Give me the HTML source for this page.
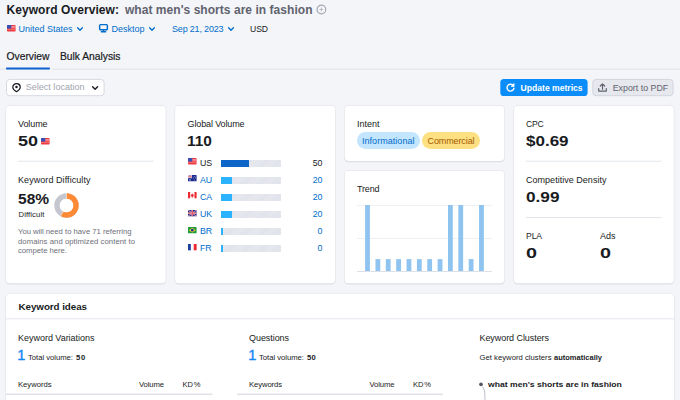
<!DOCTYPE html>
<html lang="en"><head><meta charset="utf-8"><title>Keyword Overview</title>
<style>
html,body{margin:0;padding:0;}
body{width:680px;height:400px;overflow:hidden;background:#f4f5f9;font-family:"Liberation Sans",sans-serif;}
#page{position:relative;width:680px;height:400px;overflow:hidden;background:#f4f5f9;}
.t{position:absolute;line-height:1;white-space:nowrap;}
.abs{position:absolute;}
svg{position:absolute;overflow:visible;}
.bar{background:#dfe2ea;background-image:repeating-linear-gradient(135deg,rgba(255,255,255,.25) 0 1px,transparent 1px 2px);}
.bar i{display:block;height:100%;}
.tab{-webkit-text-stroke:0.2px currentColor;}
.one{-webkit-text-stroke:0.35px currentColor;}

</style></head><body>
<div id="page">
<svg style="left:0;top:0" width="680" height="400" viewBox="0 0 680 400">
<rect x="0" y="68.6" width="680" height="1" fill="#dfe1e7"/>
<rect x="49" y="67" width="3.5" height="3" fill="#f4f5f9"/>
<rect x="6" y="67.5" width="44" height="2" rx="0.8" fill="#0d63d2"/>
<rect x="5.5" y="105.3" width="160.7" height="179.2" rx="4.3" fill="#191b23" fill-opacity="0.1"/>
<rect x="6" y="105.7" width="159.7" height="177.5" rx="3.8" fill="#fff"/>
<rect x="174.6" y="105.3" width="161.1" height="179.2" rx="4.3" fill="#191b23" fill-opacity="0.1"/>
<rect x="175.1" y="105.7" width="160.1" height="177.5" rx="3.8" fill="#fff"/>
<rect x="344.1" y="105.3" width="160.7" height="56.9" rx="4.3" fill="#191b23" fill-opacity="0.1"/>
<rect x="344.6" y="105.7" width="159.7" height="55.2" rx="3.8" fill="#fff"/>
<rect x="344.1" y="170.3" width="160.7" height="114.2" rx="4.3" fill="#191b23" fill-opacity="0.1"/>
<rect x="344.6" y="170.7" width="159.7" height="112.5" rx="3.8" fill="#fff"/>
<rect x="513.5" y="105.3" width="160.8" height="179.2" rx="4.3" fill="#191b23" fill-opacity="0.1"/>
<rect x="514" y="105.7" width="159.8" height="177.5" rx="3.8" fill="#fff"/>
<rect x="5.5" y="293.1" width="669.0" height="121.7" rx="4.3" fill="#191b23" fill-opacity="0.1"/>
<rect x="6" y="293.5" width="668" height="120" rx="3.8" fill="#fff"/>
<rect x="18" y="160.75" width="135.5" height="0.9" fill="#dfe4e9"/>
<rect x="526" y="160.75" width="135.5" height="0.9" fill="#dfe4e9"/>
<rect x="526" y="217" width="135.5" height="0.9" fill="#dfe4e9"/>
<rect x="6" y="318.3" width="668" height="1" fill="#e4e6ee"/>
<rect x="6" y="393.6" width="206.5" height="1.3" fill="#dcdee6"/>
<rect x="237" y="393.6" width="206" height="1.3" fill="#dcdee6"/>
<rect x="6.5" y="79.4" width="97.6" height="16.3" rx="3.3" fill="#fff" stroke="#d6d9e1" stroke-width="1"/>
<rect x="500.3" y="79" width="87.3" height="17" rx="3.6" fill="#0a8df8"/>
<rect x="592.8" y="79.4" width="80.3" height="16.3" rx="3.3" fill="#e6e8ee" stroke="#d2d5dd" stroke-width="1"/>
</svg>
<svg style="left:316px;top:4px" width="11" height="11" viewBox="0 0 11 11"><circle cx="5.4" cy="5.5" r="4.35" fill="none" stroke="#a3a6b1" stroke-width="1.15"/><path d="M5.4 3.6v3.8M3.5 5.5h3.8" stroke="#b4b6c0" stroke-width="0.9" fill="none"/></svg>
<svg style="left:6.5px;top:25.1px" width="8.6" height="6.4" viewBox="0 0 17 12.8" preserveAspectRatio="none"><rect width="17" height="12.8" rx="1.4" fill="#ee3b42"/><rect x="8" y="2.2" width="9" height="1.3" fill="#f8b9bb"/><rect x="8" y="5" width="9" height="1.3" fill="#f8b9bb"/><rect x="0" y="7.8" width="17" height="1.1" fill="#f59a9d"/><path d="M1.4 0H8.4V6.8H0V1.4A1.4 1.4 0 0 1 1.4 0z" fill="#3a4fb3"/></svg>
<svg style="left:77px;top:27px" width="6" height="4.6" viewBox="0 0 6 4.6"><path d="M0.6 0.7L3.0 3.3000000000000003L5.4 0.7" fill="none" stroke="#006dca" stroke-width="1.3" stroke-linecap="round" stroke-linejoin="round"/></svg>
<svg style="left:149.2px;top:27px" width="6" height="4.6" viewBox="0 0 6 4.6"><path d="M0.6 0.7L3.0 3.3000000000000003L5.4 0.7" fill="none" stroke="#006dca" stroke-width="1.3" stroke-linecap="round" stroke-linejoin="round"/></svg>
<svg style="left:228px;top:27px" width="6" height="4.6" viewBox="0 0 6 4.6"><path d="M0.6 0.7L3.0 3.3000000000000003L5.4 0.7" fill="none" stroke="#006dca" stroke-width="1.3" stroke-linecap="round" stroke-linejoin="round"/></svg>
<svg style="left:99.4px;top:24px" width="9" height="8.6" viewBox="0 0 9 8.6"><rect x="0.65" y="0.65" width="7.7" height="5.2" rx="0.9" fill="none" stroke="#006dca" stroke-width="1.45"/><path d="M4.5 5.9v1.6M2.3 7.8h4.4" stroke="#006dca" stroke-width="1.35" stroke-linecap="round" fill="none"/></svg>
<svg style="left:11.8px;top:83.2px" width="9" height="9.4" viewBox="0 0 9 9.4"><path d="M4.5 0.65C2.4 0.65 0.75 2.25 0.75 4.25c0 1.9 1.9 3.4 3.75 4.5 1.85-1.1 3.75-2.6 3.75-4.5C8.25 2.25 6.6 0.65 4.5 0.65z" fill="none" stroke="#191b23" stroke-width="1.2" stroke-linejoin="round"/><circle cx="4.5" cy="4.1" r="1.25" fill="#191b23"/></svg>
<svg style="left:91.8px;top:85.8px" width="6.2" height="4.6" viewBox="0 0 6.2 4.6"><path d="M0.6 0.7L3.1 3.3000000000000003L5.6000000000000005 0.7" fill="none" stroke="#191b23" stroke-width="1.4" stroke-linecap="round" stroke-linejoin="round"/></svg>
<svg style="left:506.2px;top:83px" width="9" height="9" viewBox="0 0 9 9"><path d="M7.35 2.7A3.45 3.45 0 1 0 7.9 5.3" fill="none" stroke="#fff" stroke-width="1.4" stroke-linecap="round"/><path d="M8.1 0.5v2.9H5.2z" fill="#fff" stroke="#fff" stroke-width="0.7" stroke-linejoin="round"/></svg>
<svg style="left:598px;top:83.2px" width="9" height="9" viewBox="0 0 9 9"><path d="M4.5 6.2V1M2.3 3L4.5 0.8 6.7 3" fill="none" stroke="#5f616c" stroke-width="1.2" stroke-linecap="round" stroke-linejoin="round"/><path d="M0.7 5.6v2.5h7.6V5.6" fill="none" stroke="#5f616c" stroke-width="1.2" stroke-linecap="round" stroke-linejoin="round"/></svg>
<svg style="left:41px;top:137.8px" width="8.6" height="6.4" viewBox="0 0 17 12.8" preserveAspectRatio="none"><rect width="17" height="12.8" rx="1.4" fill="#ee3b42"/><rect x="8" y="2.2" width="9" height="1.3" fill="#f8b9bb"/><rect x="8" y="5" width="9" height="1.3" fill="#f8b9bb"/><rect x="0" y="7.8" width="17" height="1.1" fill="#f59a9d"/><path d="M1.4 0H8.4V6.8H0V1.4A1.4 1.4 0 0 1 1.4 0z" fill="#3a4fb3"/></svg>
<svg style="left:54.1px;top:192.6px" width="25" height="25" viewBox="0 0 25 25"><circle cx="12.5" cy="12.5" r="9.5" fill="none" stroke="#c4c7cf" stroke-width="5.4"/><circle cx="12.5" cy="12.5" r="9.5" fill="none" stroke="#ff8a35" stroke-width="5.4" stroke-dasharray="34.62 59.69" transform="rotate(-90 12.5 12.5)"/><path d="M12.5 12.5V0M12.5 12.5L5.76 24.77" stroke="#fff" stroke-width="0.5" fill="none"/><circle cx="12.5" cy="12.5" r="6.8" fill="#fff"/></svg>
<svg style="left:188.2px;top:158.2px" width="8.6" height="6.4" viewBox="0 0 17 12.8" preserveAspectRatio="none"><rect width="17" height="12.8" rx="1.4" fill="#ee3b42"/><rect x="8" y="2.2" width="9" height="1.3" fill="#f8b9bb"/><rect x="8" y="5" width="9" height="1.3" fill="#f8b9bb"/><rect x="0" y="7.8" width="17" height="1.1" fill="#f59a9d"/><path d="M1.4 0H8.4V6.8H0V1.4A1.4 1.4 0 0 1 1.4 0z" fill="#3a4fb3"/></svg>
<div class="abs bar" style="left:221.3px;top:159.5px;width:60.2px;height:7px;"><i style="width:27.7px;background:#0e66c8"></i></div>
<svg style="left:188.2px;top:175.3px" width="8.6" height="6.3" viewBox="0 0 17 12" preserveAspectRatio="none"><rect width="17" height="12" rx="1.2" fill="#1b2a8e"/><path d="M0 0L8 6M8 0L0 6" stroke="#fff" stroke-width="1.6"/><path d="M4 0v6M0 3h8" stroke="#fff" stroke-width="2.2"/><path d="M4 0v6M0 3h8" stroke="#e8424e" stroke-width="1.1"/><circle cx="4" cy="9.3" r="1.3" fill="#fff"/><circle cx="12.5" cy="2.6" r="0.9" fill="#fff"/><circle cx="14.6" cy="5.4" r="0.9" fill="#fff"/><circle cx="12.5" cy="9.6" r="0.9" fill="#fff"/><circle cx="10.6" cy="5.8" r="0.9" fill="#fff"/></svg>
<div class="abs bar" style="left:221.3px;top:176.6px;width:60.2px;height:7px;"><i style="width:10.8px;background:#2bb3ff"></i></div>
<svg style="left:188.2px;top:192.4px" width="8.6" height="6.3" viewBox="0 0 17 12" preserveAspectRatio="none"><rect width="17" height="12" rx="1.2" fill="#fafafa"/><rect width="4.2" height="12" fill="#ee2730"/><rect x="12.8" width="4.2" height="12" fill="#ee2730"/><path d="M8.5 2.2l1 1.9 1.3-.5-.5 2.4 1.5-.3-.5 1.3.6.5-2.6 1.6.2 1.3H7.5l.2-1.3-2.6-1.6.6-.5-.5-1.3 1.5.3-.5-2.4 1.3.5z" fill="#ee2730"/></svg>
<div class="abs bar" style="left:221.3px;top:193.7px;width:60.2px;height:7px;"><i style="width:10.8px;background:#2bb3ff"></i></div>
<svg style="left:188.2px;top:209.5px" width="8.6" height="6.3" viewBox="0 0 17 12" preserveAspectRatio="none"><rect width="17" height="12" rx="1.4" fill="#1f2f8f"/><path d="M0 0L17 12M17 0L0 12" stroke="#dfe3f3" stroke-width="1.5"/><path d="M0 0L17 12M17 0L0 12" stroke="#e8424e" stroke-width="0.8"/><path d="M8.5 0v12M0 6h17" stroke="#eef0f8" stroke-width="2.9"/><path d="M8.5 0v12M0 6h17" stroke="#e8303a" stroke-width="1.7"/></svg>
<div class="abs bar" style="left:221.3px;top:210.8px;width:60.2px;height:7px;"><i style="width:10.8px;background:#2bb3ff"></i></div>
<svg style="left:188.2px;top:226.6px" width="8.6" height="6.3" viewBox="0 0 17 12" preserveAspectRatio="none"><rect width="17" height="12" rx="1.2" fill="#1f9a3c"/><path d="M8.5 1.5L15.3 6 8.5 10.5 1.7 6z" fill="#f9d633"/><circle cx="8.5" cy="6" r="2.7" fill="#1c2f9a"/></svg>
<div class="abs bar" style="left:221.3px;top:227.9px;width:60.2px;height:7px;"><i style="width:1.5px;background:#2bb3ff"></i></div>
<svg style="left:188.2px;top:243.7px" width="8.6" height="6.3" viewBox="0 0 17 12" preserveAspectRatio="none"><rect width="17" height="12" rx="1.2" fill="#fafafa"/><rect width="5.6" height="12" fill="#1f3fa0"/><rect x="11.4" width="5.6" height="12" fill="#ee2730"/></svg>
<div class="abs bar" style="left:221.3px;top:245.0px;width:60.2px;height:7px;"><i style="width:1.5px;background:#2bb3ff"></i></div>
<div class="abs" style="left:357px;top:132px;width:62.5px;height:16.5px;border-radius:9px;background:#c4e5fe;"></div>
<div class="abs" style="left:422px;top:132px;width:58px;height:16.5px;border-radius:9px;background:#fce081;"></div>
<svg style="left:357px;top:200px" width="136" height="75" viewBox="0 0 136 75"><path d="M0 5.5H135" stroke="#eff0f4" stroke-width="1"/><path d="M0 38.5H135" stroke="#eff0f4" stroke-width="1"/><path d="M0 71.5H135" stroke="#dde0e6" stroke-width="1"/><rect x="8.10" y="5.00" width="4.8" height="66.00" fill="#8ec4ef"/><rect x="18.46" y="59.12" width="4.8" height="11.88" fill="#8ec4ef"/><rect x="28.82" y="59.12" width="4.8" height="11.88" fill="#8ec4ef"/><rect x="39.18" y="59.12" width="4.8" height="11.88" fill="#8ec4ef"/><rect x="49.54" y="59.12" width="4.8" height="11.88" fill="#8ec4ef"/><rect x="59.90" y="59.12" width="4.8" height="11.88" fill="#8ec4ef"/><rect x="70.26" y="59.12" width="4.8" height="11.88" fill="#8ec4ef"/><rect x="80.62" y="59.12" width="4.8" height="11.88" fill="#8ec4ef"/><rect x="90.98" y="5.00" width="4.8" height="66.00" fill="#8ec4ef"/><rect x="101.34" y="5.00" width="4.8" height="66.00" fill="#8ec4ef"/><rect x="111.70" y="59.12" width="4.8" height="11.88" fill="#8ec4ef"/><rect x="122.06" y="5.00" width="4.8" height="66.00" fill="#8ec4ef"/></svg>
<svg style="left:479px;top:382px" width="12" height="20" viewBox="0 0 12 20"><circle cx="2" cy="2.3" r="1.85" fill="#535765"/><path d="M3.2 4.6C5.6 6.5 6 9.5 6 20" fill="none" stroke="#c3c6cf" stroke-width="1.1"/></svg>
<span class="t" style="top:4.01px;font-size:12px;color:#191b23;font-weight:700;letter-spacing:0.068px;left:6.50px;">Keyword Overview:</span>
<span class="t" style="top:4.01px;font-size:12px;color:#60626e;font-weight:700;letter-spacing:0.040px;left:125.00px;">what men's shorts are in fashion</span>
<span class="t" style="top:25.01px;font-size:9px;color:#006dca;letter-spacing:-0.003px;left:18.50px;">United States</span>
<span class="t" style="top:25.01px;font-size:9px;color:#006dca;letter-spacing:-0.005px;left:111.50px;">Desktop</span>
<span class="t" style="top:25.01px;font-size:9px;color:#006dca;letter-spacing:-0.179px;left:172.00px;">Sep 21, 2023</span>
<span class="t" style="top:25.00px;font-size:8.6px;color:#191b23;letter-spacing:-0.062px;left:250.00px;">USD</span>
<span class="t tab" style="top:52.02px;font-size:10.3px;color:#191b23;letter-spacing:0.010px;left:6.50px;">Overview</span>
<span class="t tab" style="top:52.02px;font-size:10.3px;color:#191b23;letter-spacing:-0.014px;left:60.00px;">Bulk Analysis</span>
<span class="t" style="top:83.42px;font-size:9px;color:#a0a3ae;letter-spacing:0.024px;left:25.70px;">Select location</span>
<span class="t" style="top:83.71px;font-size:8.6px;color:#ffffff;font-weight:700;letter-spacing:-0.007px;left:520.60px;">Update metrics</span>
<span class="t" style="top:83.70px;font-size:8.8px;color:#60626d;letter-spacing:0.020px;left:612.70px;">Export to PDF</span>
<span class="t" style="top:120.01px;font-size:9px;color:#191b23;letter-spacing:-0.097px;left:18.00px;">Volume</span>
<span class="t" style="top:134.02px;font-size:14.6px;color:#191b23;font-weight:700;transform:scaleX(1.232);transform-origin:0 0;left:17.60px;">50</span>
<span class="t" style="top:176.01px;font-size:9px;color:#191b23;letter-spacing:0.065px;left:18.00px;">Keyword Difficulty</span>
<span class="t" style="top:192.02px;font-size:14.6px;color:#191b23;font-weight:700;transform:scaleX(1.064);transform-origin:0 0;left:17.80px;">58%</span>
<span class="t" style="top:211.01px;font-size:7.7px;color:#191b23;letter-spacing:0.097px;left:18.50px;">Difficult</span>
<span class="t" style="top:228.01px;font-size:7.7px;color:#6c6e79;letter-spacing:-0.010px;left:18.00px;">You will need to have 71 referring</span>
<span class="t" style="top:238.01px;font-size:7.7px;color:#6c6e79;letter-spacing:0.064px;left:18.00px;">domains and optimized content to</span>
<span class="t" style="top:247.41px;font-size:7.7px;color:#6c6e79;letter-spacing:-0.013px;left:18.00px;">compete here.</span>
<span class="t" style="top:120.01px;font-size:9px;color:#191b23;letter-spacing:-0.124px;left:187.50px;">Global Volume</span>
<span class="t" style="top:134.02px;font-size:14.6px;color:#191b23;font-weight:700;transform:scaleX(1.057);transform-origin:0 0;left:187.30px;">110</span>
<span class="t" style="top:158.61px;font-size:8.8px;color:#191b23;left:200.00px;">US</span>
<span class="t" style="top:158.61px;font-size:8.8px;color:#191b23;right:357.50px;">50</span>
<span class="t" style="top:175.70px;font-size:8.8px;color:#006dca;left:200.00px;">AU</span>
<span class="t" style="top:175.70px;font-size:8.8px;color:#006dca;right:357.50px;">20</span>
<span class="t" style="top:192.81px;font-size:8.8px;color:#006dca;left:200.00px;">CA</span>
<span class="t" style="top:192.81px;font-size:8.8px;color:#006dca;right:357.50px;">20</span>
<span class="t" style="top:209.91px;font-size:8.8px;color:#006dca;left:200.00px;">UK</span>
<span class="t" style="top:209.91px;font-size:8.8px;color:#006dca;right:357.50px;">20</span>
<span class="t" style="top:227.00px;font-size:8.8px;color:#006dca;left:200.00px;">BR</span>
<span class="t" style="top:227.00px;font-size:8.8px;color:#006dca;right:357.50px;">0</span>
<span class="t" style="top:244.11px;font-size:8.8px;color:#006dca;left:200.00px;">FR</span>
<span class="t" style="top:244.11px;font-size:8.8px;color:#006dca;right:357.50px;">0</span>
<span class="t" style="top:120.01px;font-size:9px;color:#191b23;letter-spacing:-0.006px;left:357.00px;">Intent</span>
<span class="t" style="top:136.51px;font-size:9px;color:#006dca;letter-spacing:0.037px;left:362.00px;">Informational</span>
<span class="t" style="top:136.51px;font-size:9px;color:#a75800;letter-spacing:-0.107px;left:427.50px;">Commercial</span>
<span class="t" style="top:184.51px;font-size:9px;color:#191b23;letter-spacing:-0.153px;left:357.00px;">Trend</span>
<span class="t" style="top:120.00px;font-size:8.6px;color:#191b23;letter-spacing:-0.263px;left:526.00px;">CPC</span>
<span class="t" style="top:134.02px;font-size:14.6px;color:#191b23;font-weight:700;transform:scaleX(1.166);transform-origin:0 0;left:526.00px;">$0.69</span>
<span class="t" style="top:176.01px;font-size:9px;color:#191b23;letter-spacing:0.025px;left:526.00px;">Competitive Density</span>
<span class="t" style="top:190.02px;font-size:14.6px;color:#191b23;font-weight:700;transform:scaleX(1.179);transform-origin:0 0;left:525.60px;">0.99</span>
<span class="t" style="top:232.00px;font-size:8.6px;color:#191b23;letter-spacing:-0.100px;left:526.00px;">PLA</span>
<span class="t" style="top:232.01px;font-size:9px;color:#191b23;letter-spacing:-0.006px;left:600.00px;">Ads</span>
<span class="t" style="top:246.02px;font-size:14.6px;color:#191b23;font-weight:700;transform:scaleX(1.354);transform-origin:0 0;left:525.60px;">0</span>
<span class="t" style="top:246.02px;font-size:14.6px;color:#191b23;font-weight:700;transform:scaleX(1.354);transform-origin:0 0;left:599.60px;">0</span>
<span class="t" style="top:301.71px;font-size:9.8px;color:#191b23;font-weight:700;letter-spacing:-0.052px;left:18.50px;">Keyword ideas</span>
<span class="t" style="top:333.51px;font-size:9px;color:#191b23;letter-spacing:-0.021px;left:18.00px;">Keyword Variations</span>
<span class="t one" style="top:348.02px;font-size:14.6px;color:#0f86f5;left:17.20px;">1</span>
<span class="t" style="top:354.01px;font-size:7.7px;color:#191b23;letter-spacing:-0.024px;left:28.00px;">Total volume:</span>
<span class="t" style="top:354.01px;font-size:7.7px;color:#191b23;font-weight:700;letter-spacing:0.625px;left:76.00px;">50</span>
<span class="t" style="top:380.51px;font-size:7.7px;color:#191b23;letter-spacing:-0.035px;left:18.00px;">Keywords</span>
<span class="t" style="top:380.51px;font-size:7.7px;color:#191b23;letter-spacing:-0.116px;left:139.00px;">Volume</span>
<span class="t" style="top:380.51px;font-size:7.5px;color:#191b23;left:182.50px;">KD</span>
<span class="t" style="top:380.51px;font-size:7.5px;color:#191b23;right:479.70px;">%</span>
<span class="t" style="top:333.51px;font-size:9px;color:#191b23;letter-spacing:-0.062px;left:249.00px;">Questions</span>
<span class="t one" style="top:348.02px;font-size:14.6px;color:#0f86f5;left:248.20px;">1</span>
<span class="t" style="top:354.01px;font-size:7.7px;color:#191b23;letter-spacing:-0.024px;left:259.00px;">Total volume:</span>
<span class="t" style="top:354.01px;font-size:7.7px;color:#191b23;font-weight:700;letter-spacing:0.292px;left:307.00px;">50</span>
<span class="t" style="top:380.51px;font-size:7.7px;color:#191b23;letter-spacing:-0.102px;left:249.00px;">Keywords</span>
<span class="t" style="top:380.51px;font-size:7.7px;color:#191b23;letter-spacing:-0.116px;left:369.50px;">Volume</span>
<span class="t" style="top:380.51px;font-size:7.5px;color:#191b23;left:413.00px;">KD</span>
<span class="t" style="top:380.51px;font-size:7.5px;color:#191b23;right:249.20px;">%</span>
<span class="t" style="top:333.51px;font-size:9px;color:#191b23;letter-spacing:-0.067px;left:479.50px;">Keyword Clusters</span>
<span class="t" style="top:354.01px;font-size:7.7px;color:#191b23;letter-spacing:0.011px;left:479.50px;">Get keyword clusters</span>
<span class="t" style="top:354.01px;font-size:7.5px;color:#191b23;font-weight:700;letter-spacing:0.005px;left:554.00px;">automatically</span>
<span class="t" style="top:381.20px;font-size:7.4px;color:#191b23;font-weight:700;transform:scaleX(1.167);transform-origin:0 0;left:487.70px;">what men's shorts are in fashion</span>
</div>
</body></html>
